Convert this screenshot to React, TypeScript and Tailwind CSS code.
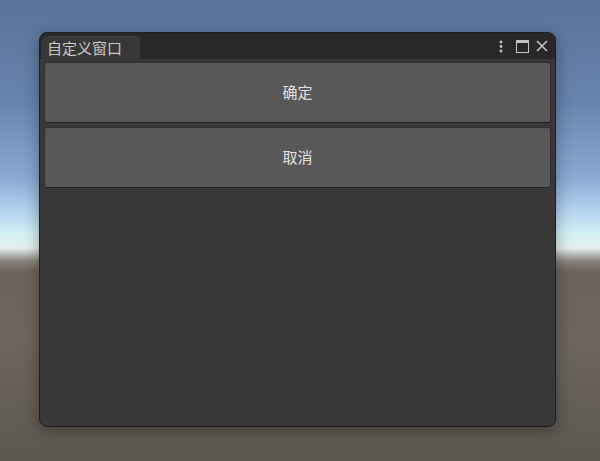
const font = { fontFamily: '"Noto Sans CJK SC", "Noto Sans", sans-serif' };

function KebabIcon() {
  return (
    <svg width="4" height="13" viewBox="0 0 4 13" className="text-[#c4c4c4]">
      <circle cx="2" cy="2" r="1.4" fill="currentColor" />
      <circle cx="2" cy="6.5" r="1.4" fill="currentColor" />
      <circle cx="2" cy="11" r="1.4" fill="currentColor" />
    </svg>
  );
}

function MaximizeIcon() {
  return (
    <svg width="13" height="13" viewBox="0 0 13 13" className="text-[#c4c4c4]">
      <rect x="0.5" y="0.5" width="12" height="12" fill="none" stroke="currentColor" />
      <rect x="0" y="0" width="13" height="3" fill="currentColor" />
    </svg>
  );
}

function CloseIcon() {
  return (
    <svg width="12" height="12" viewBox="0 0 12 12" className="text-[#c4c4c4]">
      <path d="M1 1L11 11M11 1L1 11" stroke="currentColor" strokeWidth="1.6" />
    </svg>
  );
}

function EditorButton({ label }: { label: string }) {
  return (
    <button
      type="button"
      className="flex h-[61px] w-full items-center justify-center rounded-[3px] border border-[#303030] border-b-[#222222] bg-[#585858] text-[15px] text-[#e2e2e2]"
    >
      {label}
    </button>
  );
}

export default function App() {
  return (
    <div
      className="h-[461px] w-[600px] overflow-hidden bg-[linear-gradient(to_bottom,#5a7398_0px,#6683ad_100px,#8aa9d2_178px,#b3d2f0_210px,#d4f0f4_234px,#e6eeec_248px,#8a847e_261px,#6c635d_272px,#6d655f_340px,#5d5751_461px)] pt-[32px] pl-[39px]"
      style={font}
    >
      <div className="flex h-[395px] w-[517px] flex-col overflow-hidden rounded-[8px] border border-[#1f1f1f] bg-[#383838] shadow-[0_4px_16px_rgba(0,0,0,0.35)]">
        <div className="flex h-[26px] shrink-0 items-end bg-[#282828]">
          <div className="ml-px flex h-[23px] w-[99px] items-center rounded-tl-[7px] rounded-tr-[3px] bg-[#383838] pl-[6px] text-[15px] leading-none text-[#c8c8c8]">
            自定义窗口
          </div>
          <div className="ml-auto flex h-full items-center gap-[7px] self-center pr-[7px]">
            <KebabIcon />
            <div className="ml-[6px]">
              <MaximizeIcon />
            </div>
            <CloseIcon />
          </div>
        </div>
        <div className="flex flex-col gap-[4px] px-[4px] pt-[3px]">
          <EditorButton label="确定" />
          <EditorButton label="取消" />
        </div>
      </div>
    </div>
  );
}
